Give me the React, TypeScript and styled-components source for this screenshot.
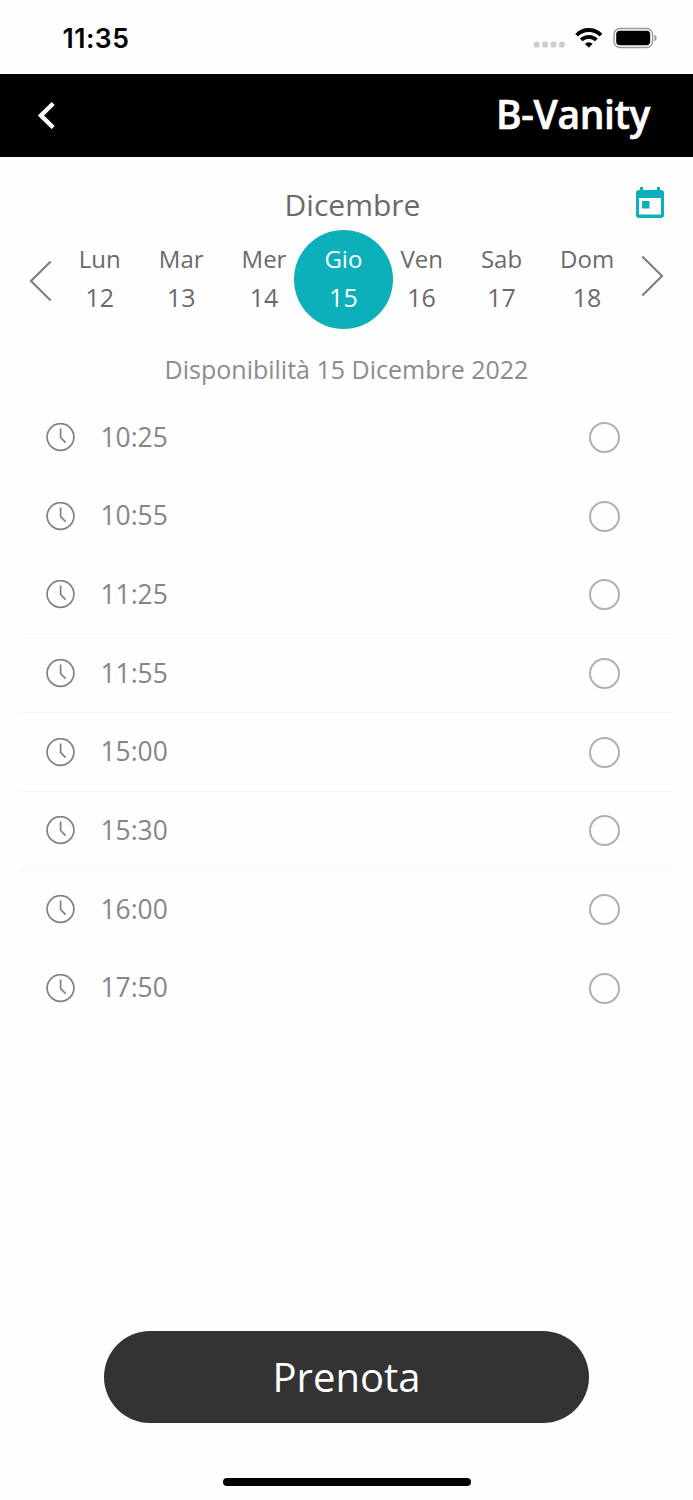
import React from "react";
import styled, { createGlobalStyle } from "styled-components";

const Global = createGlobalStyle`
  * { box-sizing: border-box; }
  body { margin: 0; background: #fefefe; }
  button { font: inherit; border: 0; padding: 0; background: none; cursor: pointer; }
  svg { display: block; flex: none; }
`;

const Screen = styled.div`
  width: 693px;
  height: 1500px;
  display: flex;
  flex-direction: column;
  align-items: center;
  overflow: hidden;
  background: #fefefe;
  font-family: "Open Sans", "Noto Sans", sans-serif;
  font-weight: 400;
`;

const StatusBar = styled.div`
  width: 100%;
  height: 73.6px;
  flex: none;
  display: flex;
  align-items: center;
  justify-content: space-between;
  padding: 4px 36px 0 62.5px;
`;

const StatusTime = styled.span`
  font: 600 26.5px/32px Inter, sans-serif;
  letter-spacing: 0.5px;
  margin-top: -2px;
  color: #000;
`;

const Header = styled.header`
  width: 100%;
  height: 83.7px;
  flex: none;
  display: flex;
  align-items: center;
  justify-content: space-between;
  padding: 0 43px 0 38px;
  background: #000;
`;

const Title = styled.h1`
  margin: -3px 0 0;
  font-size: 39px;
  line-height: 52px;
  font-weight: 600;
  letter-spacing: -0.4px;
  -webkit-text-stroke: 0.6px #fff;
  color: #fff;
`;

const MonthRow = styled.div`
  width: 100%;
  height: 73.7px;
  flex: none;
  display: grid;
  grid-template-columns: 70px 1fr 58px;
  align-items: start;
  padding-top: 27.7px;
`;

const Month = styled.h2`
  margin: 0;
  font-size: 30px;
  line-height: 40px;
  font-weight: 400;
  text-align: center;
  color: #6a6a6a;
`;

const CalendarButton = styled.button`
  padding-top: 2px;
`;

const Week = styled.div`
  width: 100%;
  height: 98px;
  flex: none;
  display: flex;
  justify-content: space-between;
  padding: 0 29px;
`;

const Arrow = styled.button<{ $top: number }>`
  height: 42px;
  margin-top: ${(p) => p.$top}px;
`;

const Days = styled.div`
  display: flex;
  gap: 38px;
  padding-top: 9.5px;
`;

const Day = styled.div<{ $active?: boolean }>`
  position: relative;
  z-index: 0;
  height: 76px;
  text-align: center;
  line-height: 38px;
  color: ${(p) => (p.$active ? "#fff" : "#6a6a6a")};

  ${(p) =>
    p.$active &&
    `&::before {
      content: "";
      position: absolute;
      z-index: -1;
      left: 50%;
      top: 50%;
      width: 99px;
      height: 99px;
      margin: -48.5px 0 0 -49px;
      border-radius: 50%;
      background: #0bb0bb;
    }`}
`;

const DayName = styled.div`
  font-size: 24px;
`;

const DayNumber = styled.div`
  font-size: 25px;
`;

const Availability = styled.p`
  margin: 21px 0 0;
  height: 48.7px;
  flex: none;
  font-size: 25px;
  line-height: 38px;
  color: #8c8c8c;
`;

const Slots = styled.ul`
  list-style: none;
  margin: 0;
  padding: 0;
  width: 652px;
`;

const Slot = styled.li`
  height: 78.7px;
  display: flex;
  align-items: center;
  padding: 0 53px 0 25px;
  border-bottom: 1.5px solid #f6f6f6;
`;

const SlotTime = styled.span`
  flex: 1;
  margin: -2px 0 0 26px;
  font-size: 26.4px;
  line-height: 38px;
  color: #868686;
`;

const Radio = styled.span`
  width: 31px;
  height: 31px;
  border: 2px solid #b0b0b0;
  border-radius: 50%;
`;

const BookButton = styled.button`
  && {
    width: 485px;
    height: 92px;
    flex: none;
    margin-top: auto;
    padding-top: 1px;
    border-radius: 46px;
    background: #333;
    color: #fff;
    font-size: 40px;
    line-height: 56px;
  }
`;

const HomeIndicator = styled.div`
  width: 248px;
  height: 8.5px;
  flex: none;
  margin: 55px 0 13.6px;
  border-radius: 5px;
  background: #000;
`;

const StatusIcons = () => (
  <svg width="124" height="24" viewBox="0 0 124 24">
    <g fill="#ccc">
      {[0.7, 9.2, 17.6, 26].map((x) => (
        <rect key={x} x={x} y="14.8" width="5.8" height="5.8" rx="1.8" />
      ))}
    </g>
    <g fill="none" stroke="#000" strokeWidth="3.8">
      <path d="M43.6 8.1a17.2 17.2 0 0 1 24.4 0" />
      <path d="M48.2 12.900a10.900 10.900 0 0 1 15.200 0" />
    </g>
    <path d="M55.8 20.700l-3.900-4a5.800 5.800 0 0 1 7.800 0z" fill="#000" />
    <rect x="81" y="1.500" width="38.600" height="19" rx="6" fill="none" stroke="#999" strokeWidth="1.400" />
    <rect x="83.200" y="3.800" width="34" height="14.400" rx="3.600" fill="#000" />
    <path d="M121.400 7.700q2.300 1 2.300 3.300t-2.300 3.300z" fill="#999" />
  </svg>
);

const ClockIcon = () => (
  <svg width="29" height="29" viewBox="0 0 29 29" fill="none" stroke="#808080" strokeWidth="1.700">
    <circle cx="14.500" cy="14" r="13.400" />
    <path d="M14.600 5.500v9l5 5.100" />
  </svg>
);

const days = [
  ["Lun", 12],
  ["Mar", 13],
  ["Mer", 14],
  ["Gio", 15],
  ["Ven", 16],
  ["Sab", 17],
  ["Dom", 18],
] as const;

const times = ["10:25", "10:55", "11:25", "11:55", "15:00", "15:30", "16:00", "17:50"];

export default function App() {
  return (
    <>
      <Global />
      <Screen>
        <StatusBar>
          <StatusTime>11:35</StatusTime>
          <StatusIcons />
        </StatusBar>
        <Header>
          <button aria-label="Indietro">
            <svg width="18" height="28" viewBox="0 0 18 28" fill="none" stroke="#fff" strokeWidth="4.400">
              <path d="M15.200 2.500L3 14.500l12.200 12" />
            </svg>
          </button>
          <Title>B-Vanity</Title>
        </Header>
        <MonthRow>
          <span />
          <Month>Dicembre</Month>
          <CalendarButton aria-label="Calendario">
            <svg width="30" height="32" viewBox="0 0 30 32" fill="#0bb0bb">
              <path
                fillRule="evenodd"
                d="M5 0h3v3h14V0h3v3h1a3 3 0 0 1 3 3v22a3 3 0 0 1-3 3h-22a3 3 0 0 1-3-3V6a3 3 0 0 1 3-3H5zM4 11v16.500h22V11z"
              />
              <path d="M7 14h7.500v7.500H7z" />
            </svg>
          </CalendarButton>
        </MonthRow>
        <Week>
          <Arrow $top={29.5} aria-label="Settimana precedente">
            <svg width="23" height="42" viewBox="0 0 23 42" fill="none" stroke="#808080" strokeWidth="2.200">
              <path d="M21.700 1.500L2 21l19.700 19.500" />
            </svg>
          </Arrow>
          <Days>
            {days.map(([name, number]) => (
              <Day key={name} $active={number === 15}>
                <DayName>{name}</DayName>
                <DayNumber>{number}</DayNumber>
              </Day>
            ))}
          </Days>
          <Arrow $top={24.5} aria-label="Settimana successiva">
            <svg width="23" height="42" viewBox="0 0 23 42" fill="none" stroke="#808080" strokeWidth="2.200">
              <path d="M1.300 1.500L21 21L1.300 40.500" />
            </svg>
          </Arrow>
        </Week>
        <Availability>Disponibilità 15 Dicembre 2022</Availability>
        <Slots>
          {times.map((time) => (
            <Slot key={time}>
              <ClockIcon />
              <SlotTime>{time}</SlotTime>
              <Radio />
            </Slot>
          ))}
        </Slots>
        <BookButton>Prenota</BookButton>
        <HomeIndicator />
      </Screen>
    </>
  );
}
